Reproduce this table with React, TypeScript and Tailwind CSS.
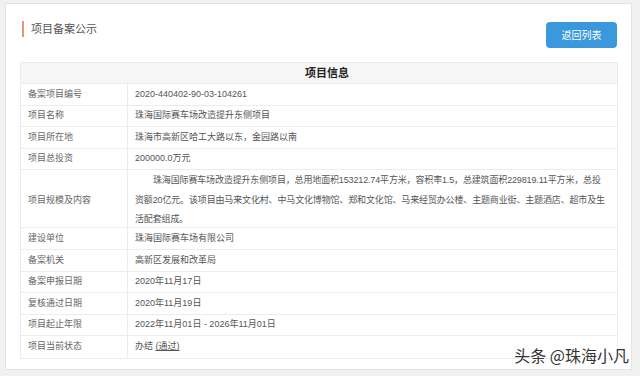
const rows: { label: string; value: React.ReactNode }[] = [
  { label: "备案项目编号", value: "2020-440402-90-03-104261" },
  { label: "项目名称", value: "珠海国际赛车场改造提升东侧项目" },
  { label: "项目所在地", value: "珠海市高新区哈工大路以东，金园路以南" },
  { label: "项目总投资", value: "200000.0万元" },
];

const rows2: { label: string; value: React.ReactNode }[] = [
  { label: "建设单位", value: "珠海国际赛车场有限公司" },
  { label: "备案机关", value: "高新区发展和改革局" },
  { label: "备案申报日期", value: "2020年11月17日" },
  { label: "复核通过日期", value: "2020年11月19日" },
  { label: "项目起止年限", value: "2022年11月01日 - 2026年11月01日" },
  {
    label: "项目当前状态",
    value: (
      <span>
        办结 <span className="underline">(通过)</span>
      </span>
    ),
  },
];

function Row({ label, value, last }: { label: string; value: React.ReactNode; last?: boolean }) {
  return (
    <div className={`grid grid-cols-[107px_1fr] h-[21.6px] ${last ? "" : "border-b border-[#ececec]"}`}>
      <div className="flex items-center pl-[7px] text-[#666] border-r border-[#ececec]">{label}</div>
      <div className="flex items-center pl-[7px] text-[#555]">{value}</div>
    </div>
  );
}

export default function App() {
  return (
    <div
      className="w-[640px] h-[376px] bg-[#f1f1f1] pt-[3px] pl-[5px] pr-[8px] relative overflow-hidden"
      style={{ fontFamily: '"Liberation Sans", "Noto Sans CJK SC", sans-serif' }}
    >
      <div className="bg-white h-[367px] border border-[#e4e4e4] pl-[14px] pr-[13px]">
        {/* Header */}
        <div className="flex items-start justify-between h-[55px]">
          <div className="flex items-center gap-[7px] pl-[2px] mt-[17px]">
            <div className="w-[2px] h-[16px] bg-[#e8937a]" />
            <span className="text-[11px] text-[#555]">项目备案公示</span>
          </div>
          <button className="w-[71px] h-[26px] mt-[18px] mr-[1px] rounded-[4px] bg-[#3b98dd] text-white text-[10px]">
            返回列表
          </button>
        </div>

        {/* Table */}
        <div className="mt-[3px] border border-[#ececec] text-[9px]">
          <div className="h-[21px] bg-[#f6f6f6] border-b border-[#ececec] flex items-center justify-center pl-[16px] text-[11px] font-bold text-[#222]">
            项目信息
          </div>
          {rows.map((r) => (
            <Row key={r.label} {...r} />
          ))}
          <div className="grid grid-cols-[107px_1fr] h-[58px] border-b border-[#ececec]">
            <div className="flex items-center pl-[7px] text-[#666] border-r border-[#ececec]">项目规模及内容</div>
            <div className="pl-[7px] pr-[10px] py-[1px] leading-[19.5px] tracking-[-0.15px] text-[#555]">
              <p className="indent-[2em]">
                珠海国际赛车场改造提升东侧项目，总用地面积153212.74平方米，容积率1.5，总建筑面积229819.11平方米，总投资额20亿元。该项目由马来文化村、中马文化博物馆、郑和文化馆、马来经贸办公楼、主题商业街、主题酒店、超市及生活配套组成。
              </p>
            </div>
          </div>
          {rows2.map((r, i) => (
            <Row key={r.label} {...r} last={i === rows2.length - 1} />
          ))}
        </div>
      </div>

      {/* watermark */}
      <div
        className="absolute right-[11px] bottom-[13px] text-[16px] text-[#333] leading-none"
        style={{ fontFamily: '"Noto Sans CJK SC", sans-serif', textShadow: "1px 1px 0 #fff, -1px -1px 0 #fff" }}
      >
        头条 @珠海小凡
      </div>
    </div>
  );
}
